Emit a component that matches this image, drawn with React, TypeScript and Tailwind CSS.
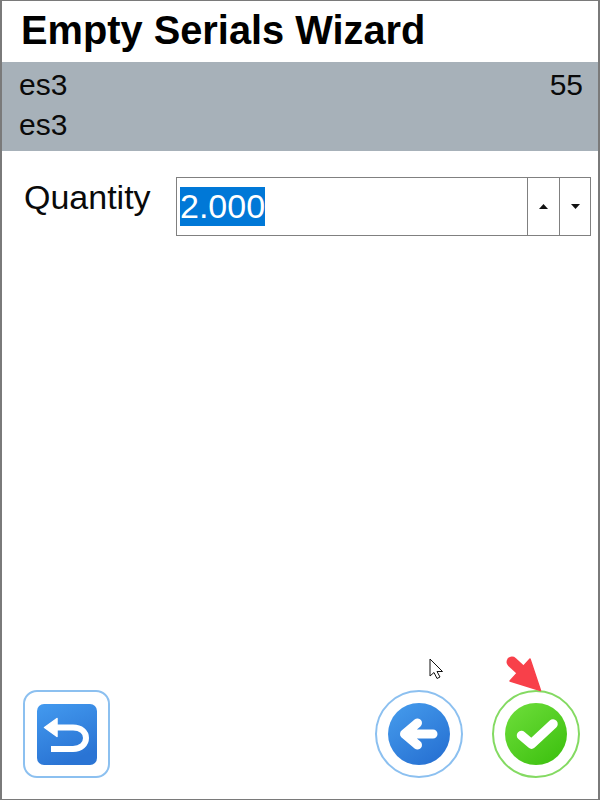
export default function App() {
  return (
    <div className="relative flex h-[800px] w-[600px] flex-col overflow-hidden border border-[#7a7a7a] border-l-2 border-r-2 bg-white font-['Liberation_Sans',Arial,sans-serif] text-[#0a0a0a]">
      <h1 className="h-[61px] pl-[19px] pt-[7px] text-[39.8px] font-bold leading-[44px] text-black">Empty Serials Wizard</h1>
      <div className="flex h-[89px] justify-between bg-[#a7b1b9] pl-[17px] pr-[15px] pt-[3px] text-[30px] leading-[40px]">
        <div>
          <div>es3</div>
          <div>es3</div>
        </div>
        <div>55</div>
      </div>
      <div className="flex items-start pl-[22px] pr-[7px] pt-[26px]">
        <div className="w-[152px] text-[34px] leading-[40px]">Quantity</div>
        <div className="flex h-[59px] flex-1 items-stretch border border-[#808080]">
          <div className="flex flex-1 items-center pl-[3px]">
            <span className="bg-[#0078d7] text-[34px] leading-[39px] text-white">2.000</span>
          </div>
          <div className="flex w-[32px] items-center justify-center border-l border-[#808080]">
            <svg width="9" height="5" viewBox="0 0 9 5"><path d="M4.500 0L9 5H0Z" fill="#111" /></svg>
          </div>
          <div className="flex w-[31px] items-center justify-center border-l border-[#808080]">
            <svg width="9" height="5" viewBox="0 0 9 5"><path d="M0 0H9L4.500 5Z" fill="#111" /></svg>
          </div>
        </div>
      </div>
      <div className="mt-auto flex items-end justify-between pb-[21px] pl-[21px] pr-[18px]">
        <button className="flex h-[88px] w-[87px] items-center justify-center rounded-[14px] border-2 border-[#8cc0f0] bg-white">
          <svg width="60" height="61" viewBox="0 0 60 61">
            <defs>
              <linearGradient id="b1" x1="0" y1="0" x2="0.4" y2="1">
                <stop offset="0" stopColor="#439aef" />
                <stop offset="1" stopColor="#2a74d4" />
              </linearGradient>
            </defs>
            <rect width="60" height="61" rx="7" fill="url(#b1)" />
            <path d="M18 23.500H36C44 23.500 49 28 49 34C49 40 44 45 36 45H14" fill="none" stroke="#fff" strokeWidth="6" />
            <path d="M20 14.500V32.500L7.500 23.500Z" fill="#fff" stroke="#fff" strokeWidth="1.500" strokeLinejoin="round" />
          </svg>
        </button>
        <div className="flex gap-[29px]">
          <button className="flex h-[88px] w-[88px] items-center justify-center rounded-full border-2 border-[#8cc0f0] bg-white">
            <svg width="62" height="62" viewBox="0 0 62 62">
              <defs>
                <linearGradient id="b2" x1="0.1" y1="0" x2="0.8" y2="1">
                  <stop offset="0" stopColor="#459bec" />
                  <stop offset="1" stopColor="#2670d2" />
                </linearGradient>
              </defs>
              <circle cx="31" cy="31" r="31" fill="url(#b2)" />
              <path d="M17 31H45M29.500 20L16.500 31L29.500 42" fill="none" stroke="#fff" strokeWidth="9" strokeLinecap="round" strokeLinejoin="round" />
            </svg>
          </button>
          <button className="flex h-[88px] w-[88px] items-center justify-center rounded-full border-2 border-[#84da62] bg-white">
            <svg width="62" height="62" viewBox="0 0 62 62">
              <defs>
                <linearGradient id="b3" x1="0.1" y1="0" x2="0.9" y2="1">
                  <stop offset="0" stopColor="#6ddd3a" />
                  <stop offset="1" stopColor="#3cc00e" />
                </linearGradient>
              </defs>
              <circle cx="31" cy="31" r="31" fill="url(#b3)" />
              <path d="M16.500 32.500L26.500 41L48 21" fill="none" stroke="#fff" strokeWidth="9.500" strokeLinecap="round" strokeLinejoin="round" />
            </svg>
          </button>
        </div>
      </div>
      <svg className="absolute left-[426px] top-[656px]" width="18" height="24" viewBox="0 0 18 24">
        <path d="M2 2V19L6 15.500L9 21.500L12 20L9 14.500H14.500Z" fill="#fff" stroke="#111" strokeWidth="1" strokeLinejoin="round" />
      </svg>
      <svg className="absolute left-[501px] top-[653px]" width="44" height="40" viewBox="0 0 44 40">
        <path d="M9 8L21 19" stroke="#f8404a" strokeWidth="11" strokeLinecap="round" fill="none" />
        <path d="M27 5L37.500 36.500L7 27Z" fill="#f8404a" stroke="#f8404a" strokeWidth="1.500" strokeLinejoin="round" />
      </svg>
    </div>
  );
}
